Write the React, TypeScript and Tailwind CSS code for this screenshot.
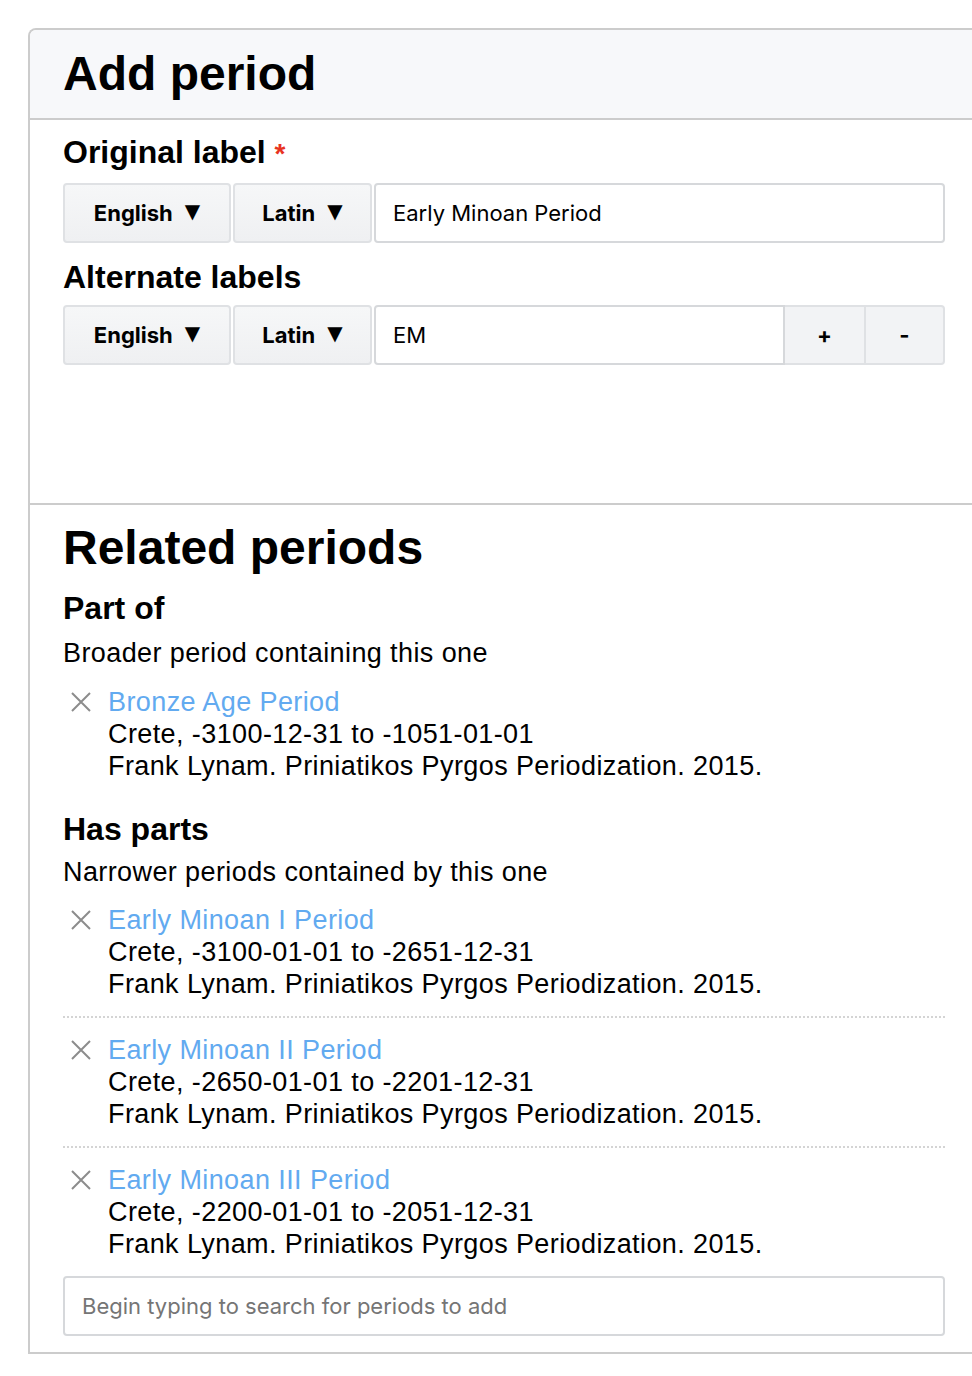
type Related = {
  label: string;
  place: string;
  source: string;
};

const broader: Related[] = [
  {
    label: "Bronze Age Period",
    place: "Crete, -3100-12-31 to -1051-01-01",
    source: "Frank Lynam. Priniatikos Pyrgos Periodization. 2015.",
  },
];

const narrower: Related[] = [
  {
    label: "Early Minoan I Period",
    place: "Crete, -3100-01-01 to -2651-12-31",
    source: "Frank Lynam. Priniatikos Pyrgos Periodization. 2015.",
  },
  {
    label: "Early Minoan II Period",
    place: "Crete, -2650-01-01 to -2201-12-31",
    source: "Frank Lynam. Priniatikos Pyrgos Periodization. 2015.",
  },
  {
    label: "Early Minoan III Period",
    place: "Crete, -2200-01-01 to -2051-12-31",
    source: "Frank Lynam. Priniatikos Pyrgos Periodization. 2015.",
  },
];

const ui = "font-['Inter','Liberation_Sans',sans-serif]";

function Dropdown({ label, width }: { label: string; width: string }) {
  return (
    <button
      type="button"
      className={`${ui} ${width} h-[60px] flex items-center justify-center gap-[12px] rounded-[4px] border-2 border-[#dfe1e4] bg-gradient-to-b from-[#f6f7f8] to-[#eff0f2] text-[22px] font-bold text-black`}
    >
      {label}
      <span className="font-['DejaVu_Sans',sans-serif] text-[20px] -mt-[4px]">▼</span>
    </button>
  );
}

function RemoveIcon() {
  return (
    <svg width="22" height="22" viewBox="0 0 22 22" className="text-[#8c8c8c]">
      <path
        d="M2 2 L20 20 M20 2 L2 20"
        stroke="currentColor"
        strokeWidth="2"
        fill="none"
      />
    </svg>
  );
}

function RelatedItem({ item }: { item: Related }) {
  return (
    <div className="flex">
      <div className="w-[45px] shrink-0 h-[32px] flex items-center pl-[7px]">
        <RemoveIcon />
      </div>
      <div className="text-[27px] leading-[32px] tracking-[0.4px]">
        <a href="#" className="text-[#62aaf0] block">
          {item.label}
        </a>
        <div>{item.place}</div>
        <div>{item.source}</div>
      </div>
    </div>
  );
}

export default function App() {
  return (
    <div className="w-[972px] h-[1376px] overflow-hidden bg-white font-['Liberation_Sans',Arial,sans-serif] text-black">
      <div className="ml-[28px] mt-[28px] w-[952px] border-2 border-b-0 border-[#cccccc] rounded-tl-[8px] rounded-tr-[8px]">
        <div className="bg-[#f7f8fa] border-b-2 border-[#cccccc] rounded-tl-[6px] px-[33px] py-4">
          <h1 className="text-[48px] font-bold leading-[56px]">Add period</h1>
        </div>

        <form className="px-[33px] pt-[15px] pb-[138px] border-b-2 border-[#cccccc]">
          <h3 className="text-[32px] font-bold leading-[38px] -translate-y-[2px]">
            Original label <span className="text-[#e8331f] text-[28px]">*</span>
          </h3>
          <div className="mt-2 flex gap-[2px]">
            <Dropdown label="English" width="w-[168px]" />
            <Dropdown label="Latin" width="w-[139px]" />
            <div className="flex-1 h-[60px] flex items-center rounded-[4px] border-2 border-[#d6d8db] bg-white pl-[17px]">
              <span className={`${ui} text-[22px]`}>Early Minoan Period</span>
            </div>
          </div>

          <h3 className="mt-[17px] text-[32px] font-bold leading-[38px] -translate-y-[2px]">
            Alternate labels
          </h3>
          <div className="mt-[7px] flex gap-[2px]">
            <Dropdown label="English" width="w-[168px]" />
            <Dropdown label="Latin" width="w-[139px]" />
            <div className="flex-1 flex">
              <div className="flex-1 h-[60px] flex items-center rounded-l-[4px] border-2 border-[#d6d8db] bg-white pl-[17px]">
                <span className={`${ui} text-[22px]`}>EM</span>
              </div>
              <button
                type="button"
                className={`${ui} w-[81px] h-[60px] border-2 border-l-0 border-[#dfe1e4] bg-[#f2f3f5] text-[22px] font-bold`}
              >
                +
              </button>
              <button
                type="button"
                className={`${ui} w-[79px] h-[60px] border-2 border-l-0 border-[#dfe1e4] rounded-r-[4px] bg-[#f2f3f5] text-[22px] font-bold`}
              >
                -
              </button>
            </div>
          </div>
        </form>

        <section className="px-[33px] pt-[15px] pb-[16px] border-b-2 border-[#cccccc]">
          <h2 className="text-[48px] font-bold leading-[56px]">
            Related periods
          </h2>

          <h3 className="mt-[13px] text-[32px] font-bold leading-[38px]">
            Part of
          </h3>
          <p className="mt-[10px] text-[27px] leading-[32px] tracking-[0.4px]">
            Broader period containing this one
          </p>
          <div className="mt-[17px]">
            {broader.map((item) => (
              <RelatedItem key={item.label} item={item} />
            ))}
          </div>

          <h3 className="mt-[28px] text-[32px] font-bold leading-[38px]">
            Has parts
          </h3>
          <p className="mt-[8px] text-[27px] leading-[32px] tracking-[0.4px]">
            Narrower periods contained by this one
          </p>
          <div>
            {narrower.map((item, i) => (
              <div
                key={item.label}
                className={`py-4 ${
                  i < narrower.length - 1
                    ? "border-b-2 border-dotted border-[#d4d4d4]"
                    : ""
                }`}
              >
                <RelatedItem item={item} />
              </div>
            ))}
          </div>

          <div className="mt-0 h-[60px] flex items-center rounded-[4px] border-2 border-[#d6d8db] pl-[17px]">
            <span className={`${ui} text-[22px] text-[#757575]`}>
              Begin typing to search for periods to add
            </span>
          </div>
        </section>
      </div>
    </div>
  );
}
